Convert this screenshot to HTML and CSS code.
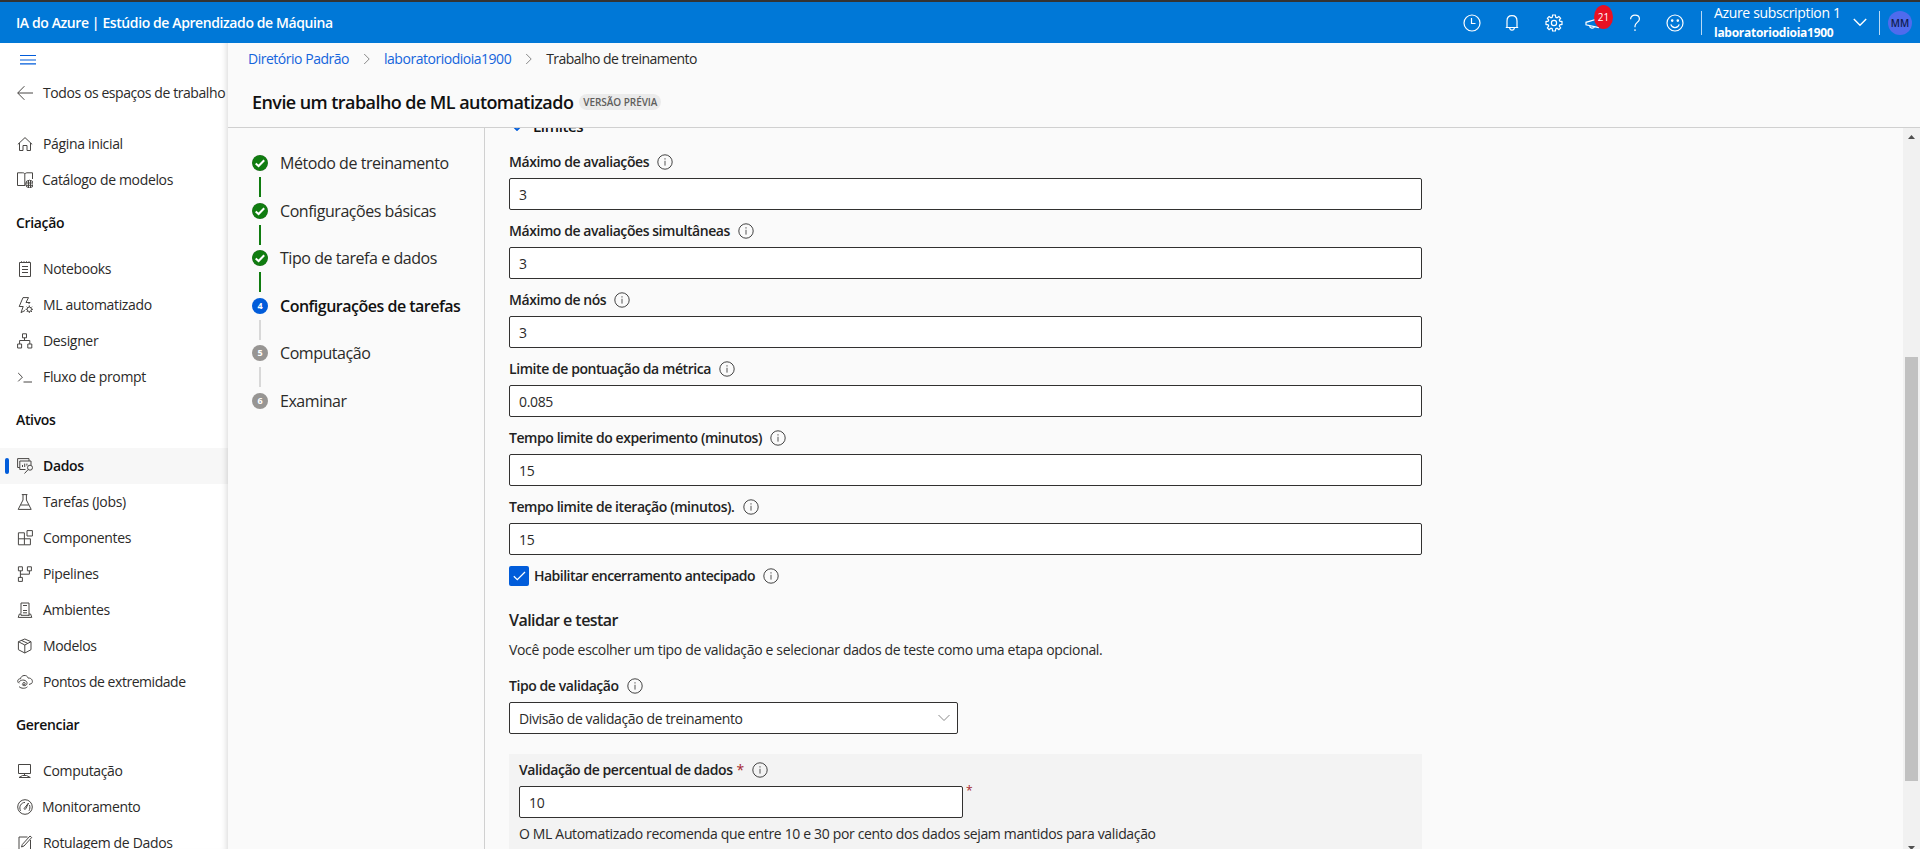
FILE: index.html
```html
<!DOCTYPE html>
<html lang="pt-BR">
<head>
<meta charset="utf-8">
<title>Estúdio de Aprendizado de Máquina</title>
<link rel="stylesheet" href="styles.css">
</head>
<body>
<svg class="defs" width="0" height="0">
  <symbol id="info" viewBox="0 0 16 16"><circle cx="8" cy="8" r="7.2" fill="none" stroke="#444" stroke-width="1"/><path d="M8 6.8V11.6" stroke="#555" stroke-width="1"/><path d="M8 4.3V5.4" stroke="#555" stroke-width="1.1"/></symbol>
  <symbol id="done" viewBox="0 0 16 16"><circle cx="8" cy="8" r="8" fill="#107c10"/><path d="M3.7 8.4L6.6 11L12.2 5.2" fill="none" stroke="#fff" stroke-width="2"/></symbol>
  <symbol id="crumb" viewBox="0 0 8 12"><path d="M1.2 1L6.2 6L1.2 11" fill="none" stroke="#888" stroke-width="1"/></symbol>
</svg>

<header class="topbar">
  <div class="brand">IA do Azure | Estúdio de Aprendizado de Máquina</div>
  <div class="tools">
    <svg class="tool tool-clock" viewBox="0 0 18 18"><circle cx="9" cy="9" r="8"/><path d="M8.5 4V9.5H12.5"/></svg>
    <svg class="tool tool-bell" viewBox="0 0 18 18"><path d="M2.8 13.5H15.2M4 13.5V7C4 3.6 6 1.7 9 1.7S14 3.6 14 7V13.5M6.6 13.8C6.8 15.4 7.8 16.2 9 16.2S11.2 15.4 11.4 13.8"/></svg>
    <svg class="tool tool-gear" viewBox="0 0 18 18"><path d="M7.6 1H10.4L10.8 3.3L12 3.8L13.9 2.5L15.6 4.2L14.3 6.1L14.8 7.2L17 7.6V10.4L14.8 10.8L14.3 12L15.6 13.9L13.9 15.6L12 14.3L10.8 14.8L10.4 17H7.6L7.2 14.8L6 14.3L4.1 15.6L2.4 13.9L3.7 12L3.2 10.8L1 10.4V7.6L3.2 7.2L3.7 6.1L2.4 4.2L4.1 2.5L6 3.8L7.2 3.3Z"/><circle cx="9" cy="9" r="2.6"/></svg>
    <div class="news">
      <svg class="tool" viewBox="0 0 18 18"><path d="M14 4.5L1 8.3V10.8L14 13.6M4.5 11.8C4.8 14.6 8.6 14.8 9.4 12.8"/></svg>
      <span class="count">21</span>
    </div>
    <svg class="tool tool-help" viewBox="0 0 18 18"><path d="M4.6 5.2C4.6 2.8 6.4 1.2 9 1.2S13.4 2.8 13.4 5C13.4 8.2 9 8.6 9 12V13.2M9 15.2V17"/></svg>
    <svg class="tool tool-smile" viewBox="0 0 18 18"><circle cx="9" cy="9" r="8"/><path d="M4.8 10.4C5.5 12.6 7 13.6 9 13.6S12.5 12.6 13.2 10.4"/><circle cx="6.2" cy="6.6" r=".7"/><circle cx="11.8" cy="6.6" r=".7"/></svg>
  </div>
  <div class="account">
    <div class="names"><span class="sub">Azure subscription 1</span><span class="workspace">laboratoriodioia1900</span></div>
    <svg class="account-chevron" viewBox="0 0 14 9"><path d="M.8 1L7 7.2L13.2 1"/></svg>
  </div>
  <div class="avatar-wrap"><div class="avatar">MM</div></div>
</header>

<div class="shell">
  <nav class="sidebar">
    <svg class="burger" viewBox="0 0 16 10"><path d="M0 .5H16M0 5H16M0 8.9H16"/></svg>
    <a class="item back"><svg viewBox="0 0 16 16"><path d="M16 8H.8M7.4 1.2L.7 8L7.4 14.8"/></svg>Todos os espaços de trabalho</a>
    <a class="item"><svg viewBox="0 0 16 16"><path d="M.8 8.4L8 1.6L15.2 8.4M2.5 7V14.5H6V9.5H10V14.5H13.5V7"/></svg>Página inicial</a>
    <a class="item shift"><svg viewBox="0 0 16 16"><path d="M8 13.5H.5V.8H5.8C7 .8 7.5 1.3 7.8 2V13M7.8 2C8.2 1.3 8.8 .8 9.8 .8H15.5V7"/><circle cx="12.5" cy="12" r="3.8"/><path d="M8.7 11H16.3M8.7 13.3H16.3M11.5 8.2V15.8M13.5 8.2V15.8"/></svg>Catálogo de modelos</a>
    <h2>Criação</h2>
    <a class="item"><svg viewBox="0 0 16 16"><path d="M2.5 1.5H13.5V15.5H2.5ZM4.5 .3V2M7 .3V2M9.5 .3V2M12 .3V2M5 5.5H11M5 8.5H11M5 11.5H11"/></svg>Notebooks</a>
    <a class="item"><svg viewBox="0 0 16 16"><path d="M8 13.5L4 15.6L6.2 9.5H2.2L6 .6H11.5L9 5.5H13L11.5 7"/><circle cx="12.3" cy="12.3" r="2.2"/><path d="M12.3 8.4V10M12.3 14.6V16M8.6 12.3H10M14.6 12.3H16M9.7 9.7L10.7 10.7M14 14L15 15M15 9.7L14 10.7M10.7 14L9.7 15"/></svg>ML automatizado</a>
    <a class="item"><svg viewBox="0 0 16 16"><path d="M5.5 .8H9.5V4.8H5.5ZM.6 11H4.6V15H.6ZM10.8 11H14.8V15H10.8ZM7.5 4.8V7.5M2.6 11V7.5H12.8V11"/></svg>Designer</a>
    <a class="item"><svg viewBox="0 0 16 16"><path d="M1.2 4L5.4 8.2L1.2 12.4M6.5 13H15"/></svg>Fluxo de prompt</a>
    <h2>Ativos</h2>
    <a class="item active"><svg viewBox="0 0 16 16"><path d="M2.8 9.5H.6V.6H12V3M2.8 3H14V7M2.8 3V11.5H8.5M5.5 9V7M7.7 9V5.6M9.9 7.6V5.6"/><circle cx="13" cy="9.7" r="2.5"/><path d="M11.2 11.5L7.5 15.5"/></svg>Dados</a>
    <a class="item"><svg viewBox="0 0 16 16"><path d="M4.8 .6H10.4M6 .6V6L1.2 15.4H14.2L9.4 6V.6M3.6 11H11.8"/></svg>Tarefas (Jobs)</a>
    <a class="item"><svg viewBox="0 0 16 16"><path d="M1.4 2.8H7.4V14.8H1.4ZM1.4 8.8H13.4V14.8H7.4M10 .6H15.4V6H10Z"/></svg>Componentes</a>
    <a class="item"><svg viewBox="0 0 16 16"><path d="M1.4 .8H5.4V4.8H1.4ZM10.4 .8H14.4V4.8H10.4ZM1.4 11.4H5.4V15.4H1.4ZM3.4 4.8V11.4M3.4 8.2H12.4V4.8"/></svg>Pipelines</a>
    <a class="item"><svg viewBox="0 0 16 16"><path d="M4 11.5V1H12V14M6 3.5H10M6 8.5H10M6 10.8H10M4 12H2.4L1.2 15.4H14.8L13.6 12H12M4 12V13.3H12"/></svg>Ambientes</a>
    <a class="item"><svg viewBox="0 0 16 16"><path d="M7.8 1L14 3.7V11.7L7.8 15L1.4 11.7V3.7ZM1.4 3.7L7.8 7L14 3.7M7.8 7V15M4.4 2.4L10.8 5.4"/></svg>Modelos</a>
    <a class="item long"><svg viewBox="0 0 16 16"><path d="M2 9.3C-.3 7.5 .8 4.5 3.5 4.8C4 1 9.8 0 11.3 4.2C14.5 3.5 16.6 7.2 14.6 9.5L12 10.5M2 8.5C2.5 5.8 8.5 4.8 9.9 8.4C10.8 12 5.8 12.5 5.2 10.5M2 12.5C4 14.8 8.5 14.8 10.4 12.8"/><circle cx="7" cy="9.7" r="1.2"/></svg>Pontos de extremidade</a>
    <h2>Gerenciar</h2>
    <a class="item"><svg viewBox="0 0 16 16"><path d="M1.5 1.5H13.5V10.5H1.5ZM7.5 10.5V12.5M2 14.5H13.3L9.5 12.5H5.5Z"/></svg>Computação</a>
    <a class="item shift"><svg viewBox="0 0 16 16"><circle cx="8" cy="8" r="7.3"/><path d="M3.6 11.8C1.5 8 4 3.5 8 3.4M12.5 6C13.2 8 13 10 12 11.8M7.3 9.3L11.5 4L8.8 9.8C8 10.8 6.6 10.3 7.3 9.3Z"/></svg>Monitoramento</a>
    <a class="item"><svg viewBox="0 0 16 16"><path d="M10.5 2H2V14.5H13.5V5M4.5 12L5.3 9.5L13 1L14.7 2.5L7 11Z"/></svg>Rotulagem de Dados</a>
  </nav>

  <main class="page">
    <div class="page-head">
      <div class="crumbs"><a>Diretório Padrão</a><svg><use href="#crumb"/></svg><a>laboratoriodioia1900</a><svg><use href="#crumb"/></svg><span>Trabalho de treinamento</span></div>
      <div class="title-row"><h1>Envie um trabalho de ML automatizado</h1><span class="badge">VERSÃO PRÉVIA</span></div>
    </div>
    <div class="body">
      <ol class="steps">
        <li class="done"><svg class="dot"><use href="#done"/></svg><span>Método de treinamento</span></li>
        <li class="done"><svg class="dot"><use href="#done"/></svg><span>Configurações básicas</span></li>
        <li class="done"><svg class="dot"><use href="#done"/></svg><span>Tipo de tarefa e dados</span></li>
        <li class="current"><b class="dot">4</b><span>Configurações de tarefas</span></li>
        <li><b class="dot">5</b><span>Computação</span></li>
        <li><b class="dot">6</b><span>Examinar</span></li>
      </ol>
      <section class="form">
        <div class="group"><svg viewBox="0 0 10 6"><path d="M1 1L5 5L9 1"/></svg>Limites</div>
        <div class="field"><label>Máximo de avaliações<svg><use href="#info"/></svg></label><div class="input">3</div></div>
        <div class="field"><label>Máximo de avaliações simultâneas<svg><use href="#info"/></svg></label><div class="input">3</div></div>
        <div class="field"><label>Máximo de nós<svg><use href="#info"/></svg></label><div class="input">3</div></div>
        <div class="field"><label>Limite de pontuação da métrica<svg><use href="#info"/></svg></label><div class="input">0.085</div></div>
        <div class="field"><label>Tempo limite do experimento (minutos)<svg><use href="#info"/></svg></label><div class="input">15</div></div>
        <div class="field"><label>Tempo limite de iteração (minutos).<svg><use href="#info"/></svg></label><div class="input">15</div></div>
        <label class="check"><svg class="box" viewBox="0 0 20 20"><path d="M4.8 10.2L8.3 13.6L16 6"/></svg>Habilitar encerramento antecipado<svg><use href="#info"/></svg></label>
        <h3>Validar e testar</h3>
        <p class="desc">Você pode escolher um tipo de validação e selecionar dados de teste como uma etapa opcional.</p>
        <div class="field"><label>Tipo de validação<svg><use href="#info"/></svg></label>
          <div class="input select">Divisão de validação de treinamento<svg viewBox="0 0 12 8"><path d="M.5 1L6 6.5L11.5 1"/></svg></div></div>
        <div class="panel">
          <label>Validação de percentual de dados<i>*</i><svg><use href="#info"/></svg></label>
          <div class="required"><div class="input">10</div><i>*</i></div>
          <p class="hint">O ML Automatizado recomenda que entre 10 e 30 por cento dos dados sejam mantidos para validação</p>
        </div>
      </section>
      <div class="scrollbar"><svg class="arrow" viewBox="0 0 7 4"><path d="M3.5 0L7 4H0Z"/></svg><div class="thumb"></div><svg class="arrow down" viewBox="0 0 7 4"><path d="M0 0H7L3.5 4Z"/></svg></div>
    </div>
  </main>
</div>
</body>
</html>
```
FILE: styles.css
```css
* { box-sizing: border-box; }
body { margin: 0; height: 849px; overflow: hidden; display: flex; flex-direction: column; font: 14px/20px "Open Sans", "Noto Sans", sans-serif; color: #2b2a29; letter-spacing: -0.34px; background: #fafafa; }
h1, h2, h3, p, ol { margin: 0; padding: 0; }
i { font-style: normal; color: #a4262c; }
.defs { position: absolute; }

.topbar { flex: none; height: 43px; border-top: 2px solid #333; background: #0078d7; color: #fff; display: flex; align-items: center; padding-left: 16px; }
.brand { font-weight: 600; white-space: nowrap; letter-spacing: -0.4px; }
.tools { margin-left: auto; display: flex; align-items: center; }
.tool { display: block; width: 18px; height: 18px; fill: none; stroke: #fff; stroke-width: 1.2; }
.tool-clock { margin-right: 22px; }
.tool-bell { margin-right: 24px; }
.tool-gear { margin-right: 22px; }
.news { position: relative; width: 18px; margin-right: 23px; }
.count { position: absolute; left: 9px; top: -9px; width: 19px; height: 24px; border-radius: 50%; background: #e81123; font-size: 10px; line-height: 24px; text-align: center; letter-spacing: 0; }
.tool-help { margin-right: 22px; }
.tool-smile { margin-right: 17px; }
.account { height: 24px; border-left: 1px solid #b8d9f5; padding-left: 12px; display: flex; align-items: center; width: 178px; }
.names { display: flex; flex-direction: column; width: 126px; margin-right: 13px; white-space: nowrap; }
.sub { line-height: 20px; }
.workspace { font-size: 12px; font-weight: 700; line-height: 20px; letter-spacing: -0.27px; }
.account-chevron { width: 14px; height: 9px; fill: none; stroke: #fff; stroke-width: 1.4; }
.avatar-wrap { border-left: 1px solid #b8d9f5; height: 24px; padding: 0 8px; }
.avatar { width: 24px; height: 24px; border-radius: 50%; background: #4f6bed; color: #101d50; font-size: 10px; font-weight: 600; line-height: 24px; text-align: center; letter-spacing: 0; }

.shell { flex: 1; min-height: 0; display: flex; }
.sidebar { width: 228px; flex: none; background: #fff; overflow: hidden; box-shadow: inset -6px 0 6px -5px rgba(0,0,0,.16); }
.burger { display: block; width: 16px; height: 10px; margin: 12px 0 0 20px; fill: none; stroke: #015cda; stroke-width: 1.2; }
.item { display: flex; align-items: center; height: 36px; padding-left: 17px; gap: 10px; white-space: nowrap; }
.item svg { flex: none; width: 16px; height: 16px; fill: none; stroke: #484644; stroke-width: 1; }
.item.back { margin: 10px 0 15px; letter-spacing: -0.42px; }
.item.long { letter-spacing: -0.46px; }
.item.shift { gap: 9px; }
.sidebar h2 { height: 53px; padding: 15px 16px 0; font-size: 14px; line-height: 20px; font-weight: 550; color: #111; }
.item.active { background: rgba(0,0,0,.03); color: #111; font-weight: 550; position: relative; }
.item.active::before { content: ""; position: absolute; left: 5px; top: 10px; width: 4px; height: 16px; border-radius: 2px; background: #015cda; }

.page { flex: 1; min-width: 0; display: flex; flex-direction: column; }
.page-head { flex: none; height: 85px; border-bottom: 1px solid #d0d0d0; }
.crumbs { display: flex; align-items: center; padding: 6px 0 0 20px; white-space: nowrap; letter-spacing: -0.48px; }
.crumbs a { color: #1464dc; }
.crumbs svg { width: 8px; height: 12px; margin: 0 13px 0 14px; }
.crumbs span { letter-spacing: -0.54px; }
.title-row { display: flex; align-items: center; padding: 21px 0 0 24px; height: 45px; gap: 6px; }
h1 { font-size: 18px; line-height: 24px; font-weight: 550; color: #111; white-space: nowrap; letter-spacing: -0.57px; }
.badge { height: 16px; border-radius: 8px; padding: 0 4px; background: #ebebeb; color: #605e5c; font-size: 10px; line-height: 16px; font-weight: 550; white-space: nowrap; letter-spacing: -0.05px; }

.body { flex: 1; min-height: 0; display: flex; }
.steps { width: 257px; flex: none; border-right: 1px solid #d0d0d0; padding: 27px 0 0 24px; list-style: none; font-size: 16px; letter-spacing: -0.45px; }
.steps li { height: 47.6px; display: grid; grid-template-columns: 16px 1fr; grid-template-rows: 16px 20px; column-gap: 12px; row-gap: 6px; white-space: nowrap; }
.steps li > span { line-height: 16px; }
.steps li:not(:last-child)::after { content: ""; width: 2px; height: 20px; margin-left: 7px; background: #d8d8d8; }
.steps li.done:not(:last-child)::after { background: #107c10; }
.dot { width: 16px; height: 16px; border-radius: 50%; background: #979593; color: #fff; font-size: 9px; line-height: 16px; text-align: center; letter-spacing: 0; }
.current .dot { background: #015cda; }
.current span { font-weight: 550; color: #111; letter-spacing: -0.5px; }

.form { width: 937px; flex: none; padding-left: 24px; overflow: hidden; }
.group { height: 24px; margin-top: -13px; padding: 0 0 2px 3px; display: flex; align-items: center; font-size: 15px; font-weight: 550; gap: 11px; color: #111; }
.group svg { width: 10px; height: 6px; margin-top: 3px; fill: none; stroke: #015cda; stroke-width: 1.8; }
label { display: flex; align-items: center; font-weight: 550; color: #222; white-space: nowrap; letter-spacing: -0.43px; }
label svg { width: 16px; height: 16px; margin-left: 8px; }
.field { height: 69px; padding-top: 13px; }
.input { height: 32px; margin-top: 6px; border: 1px solid #323130; border-radius: 2px; background: #fff; padding: 0 9px; line-height: 31px; }
.check { height: 20px; margin-top: 13px; letter-spacing: -0.52px; }
.check .box { margin: 0 5px 0 0; width: 20px; height: 20px; border-radius: 2px; background: #015cda; fill: none; stroke: #fff; stroke-width: 1.3; }
h3 { margin-top: 24px; font-size: 16px; line-height: 20px; font-weight: 550; color: #222; letter-spacing: -0.55px; }
.desc { margin: 10px 0 3px; white-space: nowrap; }
.select { width: 449px; display: flex; align-items: center; justify-content: space-between; padding-right: 7px; letter-spacing: -0.38px; }
.select svg { width: 12px; height: 8px; fill: none; stroke: #888; stroke-width: 1; }
.panel { margin-top: 22px; height: 120px; background: #f3f3f3; padding: 6px 10px; }
.panel label i { margin-left: 4px; font-weight: 400; }
.required { display: flex; gap: 3px; }
.required .input { width: 444px; }
.required i { line-height: 20px; font-size: 12px; margin-top: 1px; }
.hint { margin-top: 6px; white-space: nowrap; }

.scrollbar { width: 17px; margin-left: auto; background: #f1f1f1; display: flex; flex-direction: column; align-items: center; padding-top: 7px; overflow: hidden; }
.arrow { flex: none; width: 7px; height: 4px; fill: #505050; }
.thumb { flex: none; width: 13px; height: 424px; margin-top: 218px; background: #c1c1c1; }
.down { margin-top: 65px; }
```
